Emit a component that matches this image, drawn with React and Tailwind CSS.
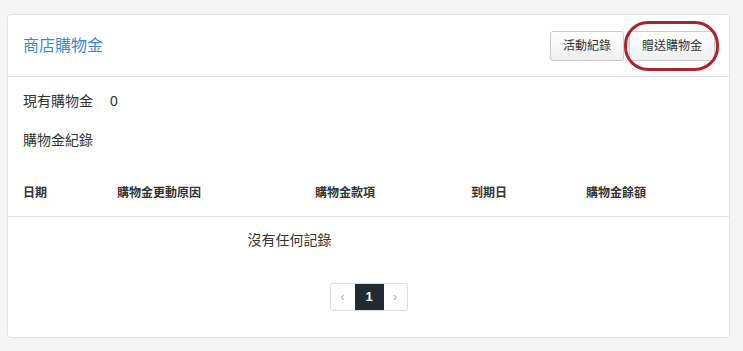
import React from 'react';

const font = { fontFamily: '"Helvetica Neue", "Liberation Sans", "Noto Sans CJK TC", sans-serif' };

const columns = ['日期', '購物金更動原因', '購物金款項', '到期日', '購物金餘額'];

const App = () => {
  return (
    <div className="min-h-[351px] w-full bg-[#f5f5f5] pt-[14px] pl-[7px] pr-[13px] pb-[13px] text-[#333]" style={font}>
      <div className="w-[723px] bg-white border border-[#e3e3e3] rounded-[4px]">
        {/* Header */}
        <div className="h-[62px] flex items-center justify-between pl-[15px] pr-[14px] border-b border-[#e6e6e6]">
          <h2 className="text-[16px] text-[#3b8ad9] leading-none">商店購物金</h2>
          <div className="flex items-center gap-[5px] pt-[1px]">
            <button className="h-[30px] px-[12px] text-[12px] text-[#333] rounded-[3px] border border-[#cdcdcd] bg-gradient-to-b from-white to-[#efefef]">
              活動紀錄
            </button>
            <div className="relative">
              <button className="h-[30px] px-[12px] text-[12px] text-[#333] rounded-[3px] border border-[#cdcdcd] bg-gradient-to-b from-white to-[#efefef]">
                贈送購物金
              </button>
              <div className="absolute left-[-5px] right-[-4px] top-[-10px] bottom-[-10px] rounded-[24px] border-[3px] border-[#b1212c] pointer-events-none" />
            </div>
          </div>
        </div>

        {/* Body */}
        <div className="pt-[14px] pb-[26px]">
          <div className="flex items-center h-[20px] px-[15px] text-[14px]">
            <span>現有購物金</span>
            <span className="ml-[17px]">0</span>
          </div>
          <div className="mt-[19px] h-[20px] flex items-center px-[15px] text-[14px]">購物金紀錄</div>

          {/* Table */}
          <div className="mt-[19px]">
            <div className="grid grid-cols-[94px_198px_156px_115px_158px] h-[48px] items-center border-b border-[#e3e3e3] text-[12px] font-semibold text-[#333]">
              {columns.map((c) => (
                <div key={c} className="px-[15px]">{c}</div>
              ))}
            </div>
            <div className="grid grid-cols-[563px_158px] pt-[13px]">
              <div className="h-[20px] flex items-center justify-center text-[14px]">沒有任何記錄</div>
              <div />
            </div>
          </div>

          {/* Pagination */}
          <div className="mt-[33px] flex justify-center">
            <div className="flex h-[28px] border border-[#dddddd] rounded-[3px] overflow-hidden">
              <span className="w-[24px] flex items-center justify-center text-[12px] text-[#aaa]">‹</span>
              <span className="w-[29px] flex items-center justify-center text-[13px] font-bold text-white bg-[#222a33]">1</span>
              <span className="w-[23px] flex items-center justify-center text-[12px] text-[#aaa]">›</span>
            </div>
          </div>
        </div>
      </div>
    </div>
  );
};

export default App;
